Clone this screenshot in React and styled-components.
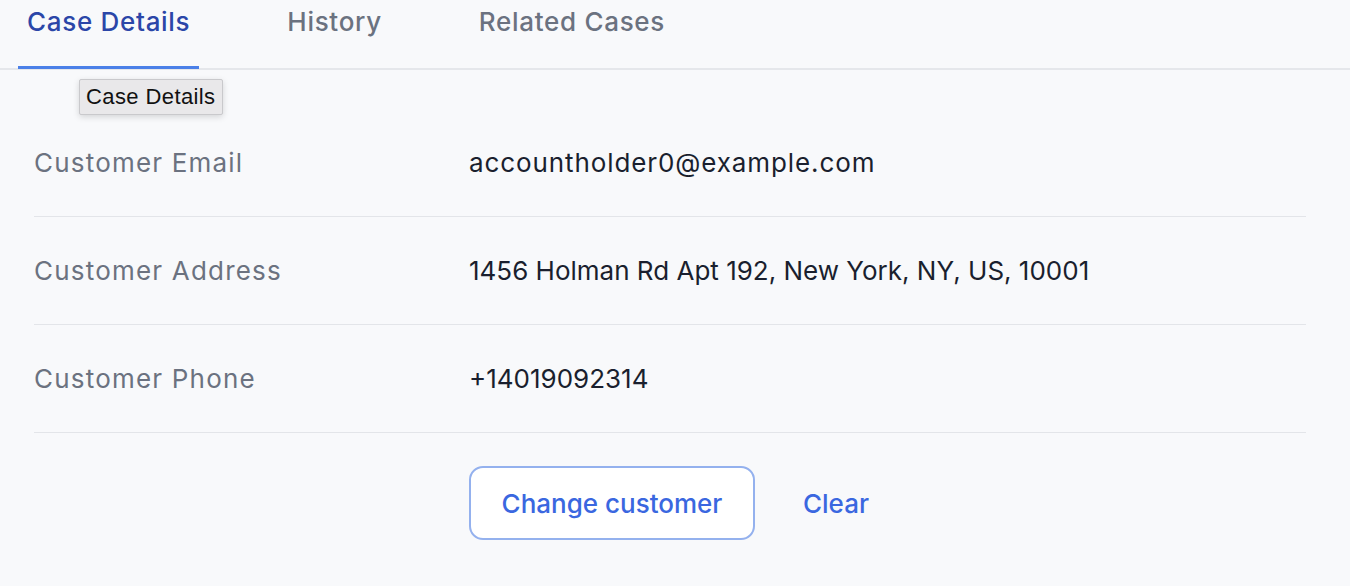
import React from 'react';
import styled, { createGlobalStyle } from 'styled-components';

const GlobalStyle = createGlobalStyle`
  html, body {
    margin: 0;
    padding: 0;
    background: #f8f9fb;
    font-family: Inter, "Noto Sans", sans-serif;
  }
`;

const Page = styled.div`
  width: 1350px;
  height: 586px;
  overflow: hidden;
  background: #f8f9fb;
`;

const TabBar = styled.div`
  display: flex;
  gap: 79px;
  padding-left: 18px;
  border-bottom: 2px solid #e5e7eb;
  height: 70px;
  box-sizing: border-box;
  position: relative;
`;

const Tab = styled.div`
  padding: 6px 9px 0;
  font-size: 26px;
  font-weight: 500;
  letter-spacing: 0.7px;
  color: ${(p) => (p.$active ? '#2b46a8' : '#6b7280')};
  border-bottom: 3px solid ${(p) => (p.$active ? '#4b80e8' : 'transparent')};
  margin-bottom: -2px;
  height: 69px;
  box-sizing: border-box;
`;

const Tooltip = styled.div`
  position: absolute;
  left: 79px;
  top: 79px;
  padding: 3px 6px;
  background: #e9e8ea;
  border: 1px solid #c9c9cc;
  border-radius: 2px;
  box-shadow: 0 2px 6px rgba(0, 0, 0, 0.15);
  font-family: "Liberation Sans", Arial, sans-serif;
  font-size: 22px;
  letter-spacing: 0.4px;
  line-height: 28px;
  color: #111;
`;

const Details = styled.div`
  padding: 39px 44px 0 34px;
`;

const Row = styled.div`
  display: grid;
  grid-template-columns: 435px 1fr;
  align-items: center;
  height: 107px;
  border-bottom: 1px solid #e3e5e9;
`;

const Label = styled.div`
  font-size: 26px;
  font-weight: 400;
  letter-spacing: 1.2px;
  color: #6b7280;
`;

const Value = styled.div`
  font-size: 26px;
  letter-spacing: ${(p) => (p.$wide ? '0.9px' : '0')};
  color: #1a1f2e;
`;

const Actions = styled.div`
  display: flex;
  align-items: center;
  gap: 48px;
  padding: 33px 0 0 435px;
`;

const OutlineButton = styled.button`
  width: 286px;
  height: 74px;
  background: #fff;
  border: 2px solid #94b1ee;
  border-radius: 14px;
  font-family: inherit;
  font-size: 26px;
  font-weight: 500;
  color: #3a67e0;
`;

const LinkButton = styled.button`
  background: none;
  border: none;
  padding: 0;
  font-family: inherit;
  font-size: 26px;
  font-weight: 500;
  color: #3a67e0;
`;

const rows = [
  ['Customer Email', 'accountholder0@example.com', true],
  ['Customer Address', '1456 Holman Rd Apt 192, New York, NY, US, 10001', false],
  ['Customer Phone', '+14019092314', false],
];

export default function App() {
  return (
    <Page>
      <GlobalStyle />
      <TabBar>
        <Tab $active>Case Details</Tab>
        <Tab>History</Tab>
        <Tab>Related Cases</Tab>
        <Tooltip>Case Details</Tooltip>
      </TabBar>
      <Details>
        {rows.map(([label, value, wide]) => (
          <Row key={label}>
            <Label>{label}</Label>
            <Value $wide={wide}>{value}</Value>
          </Row>
        ))}
        <Actions>
          <OutlineButton>Change customer</OutlineButton>
          <LinkButton>Clear</LinkButton>
        </Actions>
      </Details>
    </Page>
  );
}
